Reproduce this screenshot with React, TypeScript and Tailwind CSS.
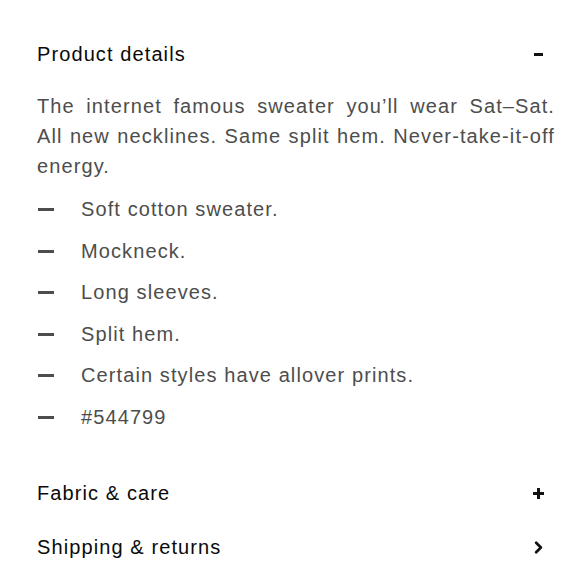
import { ChevronRight } from "lucide-react";

const BULLETS = [
  "Soft cotton sweater.",
  "Mockneck.",
  "Long sleeves.",
  "Split hem.",
  "Certain styles have allover prints.",
  "#544799",
];

function Row({ label, icon }: { label: string; icon: React.ReactNode }) {
  return (
    <div className="flex h-[54px] items-center justify-between pr-[12px]">
      <span className="text-[20px] tracking-[1.1px] text-[#0a0a0a]">{label}</span>
      {icon}
    </div>
  );
}

export default function App() {
  return (
    <div
      className="min-h-[580px] w-[580px] bg-white pl-[37px] pr-[25px] pt-[27px]"
      style={{ fontFamily: '"Liberation Sans", Arial, sans-serif' }}
    >
      <Row
        label="Product details"
        icon={<span className="block h-[3px] w-[9px] bg-[#111]" />}
      />

      {/* lines are fixed so the wrap matches; last-line justify spreads the broken lines */}
      <p className="mt-[10px] whitespace-nowrap text-justify text-[20px] leading-[30px] tracking-[1.1px] text-[#4d4d4d] [text-align-last:justify]">
        The internet famous sweater you’ll wear Sat–Sat.
        <br />
        All new necklines. Same split hem. Never-take-it-off
        <br />
        energy.
      </p>

      <ul className="mt-[8px]">
        {BULLETS.map((b) => (
          <li
            key={b}
            className="flex items-center text-[20px] leading-[41.5px] tracking-[1.1px] text-[#4d4d4d]"
          >
            <span className="ml-px mr-[27px] block h-[3px] w-[16px] bg-[#4d4d4d]" />
            {b}
          </li>
        ))}
      </ul>

      <div className="mt-[28px]">
        <Row
          label="Fabric & care"
          icon={
            <span className="relative -mr-px block h-[11px] w-[11px]">
              <span className="absolute left-0 top-[4px] h-[3px] w-[11px] bg-[#111]" />
              <span className="absolute left-[4px] top-0 h-[11px] w-[3px] bg-[#111]" />
            </span>
          }
        />
        <Row
          label="Shipping & returns"
          icon={
            <ChevronRight
              className="-mr-[5px] h-[19px] w-[19px] text-[#111]"
              strokeWidth={3.4}
            />
          }
        />
      </div>
    </div>
  );
}
